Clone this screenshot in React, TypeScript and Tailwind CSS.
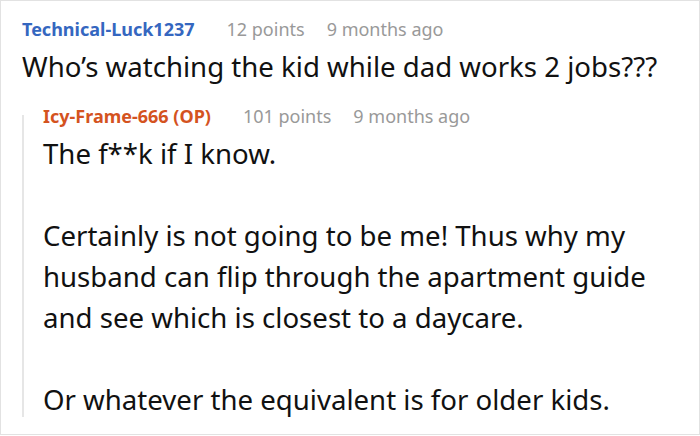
import React from "react";

function Header({ name, nameColor, points, time }: { name: string; nameColor: string; points: string; time: string }) {
  return (
    <div className="flex items-baseline text-[18px] leading-[24px]">
      <span className={`font-bold ${nameColor}`}>{name}</span>
      <span className="ml-[32px] text-[#999999]">{points}</span>
      <span className="ml-[22px] text-[#999999]">{time}</span>
    </div>
  );
}

export default function App() {
  return (
    <div
      className="w-[700px] h-[435px] border border-[#e2e2e2] bg-white pl-[21px] pt-[16px] text-[#111111]"
      style={{ fontFamily: '"Noto Sans", "Open Sans", sans-serif' }}
    >
      <Header name="Technical-Luck1237" nameColor="text-[#3567c0]" points="12 points" time="9 months ago" />
      <p className="mt-[5px] text-[27.6px] leading-[41px]">Who’s watching the kid while dad works 2 jobs???</p>
      <div className="mt-[17px] flex">
        <div className="w-[2px] bg-[#e6e6e6] mt-[11px] mb-[3px]" />
        <div className="pl-[19px]">
          <Header name="Icy-Frame-666 (OP)" nameColor="text-[#d4531f]" points="101 points" time="9 months ago" />
          <div className="mt-[5px] text-[27.6px] leading-[41px]">
            <p>The f**k if I know.</p>
            <p className="mt-[41px]">
              Certainly is not going to be me! Thus why my
              <br />
              husband can flip through the apartment guide
              <br />
              and see which is closest to a daycare.
            </p>
            <p className="mt-[41px]">Or whatever the equivalent is for older kids.</p>
          </div>
        </div>
      </div>
    </div>
  );
}
